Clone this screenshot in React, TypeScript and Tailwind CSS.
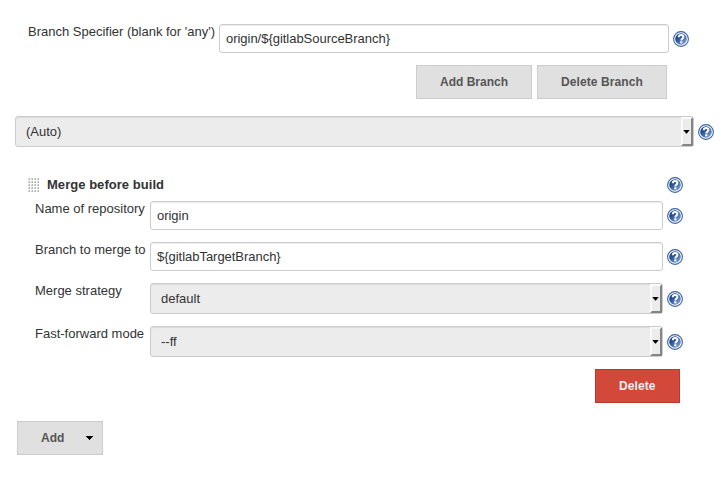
import type { ReactNode } from "react";

function HelpIcon({ className = "" }: { className?: string }) {
  return (
    <svg className={`h-4 w-4 shrink-0 ${className}`} viewBox="0 0 16 16" aria-label="Help">
      <defs>
        <linearGradient id="helpFill" x1="0" y1="0" x2="1" y2="1">
          <stop offset="0.3" stopColor="#1f4a90" />
          <stop offset="1" stopColor="#8fb0dc" />
        </linearGradient>
      </defs>
      <circle cx="8" cy="8" r="7.4" fill="#fff" stroke="#3b62a0" strokeWidth="1.1" />
      <circle cx="8" cy="8" r="5.8" fill="url(#helpFill)" />
      <path d="M5.700 6.300C5.800 4.700 6.700 4 8.100 4c1.400 0 2.300.7 2.300 1.900 0 1.500-2.100 1.600-2.100 3.500" fill="none" stroke="#fff" strokeWidth="1.900" />
      <rect x="7.200" y="10.300" width="2.200" height="2" fill="#fff" />
    </svg>
  );
}

function Caret() {
  return (
    <svg className="h-1 w-[7px] shrink-0" viewBox="0 0 7 4" shapeRendering="crispEdges">
      <path d="M0 0h7v1H6v1H5v1H4v1H3V3H2V2H1V1H0z" fill="#000" />
    </svg>
  );
}

function SelectCaret() {
  return (
    <svg className="-ml-px h-1 w-[7px] shrink-0" viewBox="0 0 7 4">
      <path d="M.3 0h6.400L3.900 3.600h-.8z" fill="#000" />
    </svg>
  );
}

function TextBox({ value, className }: { value: string; className: string }) {
  return (
    <div className={`flex h-[29px] items-center rounded-[3px] border border-[#ccc] bg-white px-1.5 tracking-[-0.03px] shadow-[inset_0_1px_1px_rgba(0,0,0,0.075)] ${className}`}>
      {value}
    </div>
  );
}

function SelectBox({ value, className }: { value: string; className: string }) {
  return (
    <div className={`flex h-[31px] items-center justify-between rounded-[3px] border border-[#ccc] bg-[#ececec] pl-2.5 shadow-[inset_0_1px_1px_rgba(0,0,0,0.075)] ${className}`}>
      <span>{value}</span>
      <span className="flex h-[29px] w-3 items-center justify-center border-2 border-t-[#fafafa] border-r-[#858585] border-b-[#858585] border-l-[#fafafa] bg-[#ececec]">
        <SelectCaret />
      </span>
    </div>
  );
}

function Button({ children, className = "" }: { children: ReactNode; className?: string }) {
  return (
    <button className={`flex h-[34px] items-center border border-[#ccc] bg-[#e0e0e0] pl-[23px] text-[12px] leading-[14px] font-bold whitespace-nowrap text-[#555] ${className}`}>
      {children}
    </button>
  );
}

function Field({ label, className, children }: { label: string; className: string; children: ReactNode }) {
  return (
    <div className={`flex pl-[35px] ${className}`}>
      <div className="w-[115px] shrink-0 whitespace-nowrap">{label}</div>
      {children}
    </div>
  );
}

function DragHandle() {
  return (
    <svg className="mt-px mr-2 h-[14px] w-[11px]" viewBox="0 0 11 14" shapeRendering="crispEdges">
      <defs>
        <pattern id="grip" width="3" height="3" patternUnits="userSpaceOnUse">
          <rect width="2" height="2" fill="#e2e2e2" />
          <rect width="1" height="1" x="1" fill="#bbb" />
          <rect width="1" height="1" x="1" y="1" fill="#b4b4b4" />
          <rect width="1" height="1" y="1" fill="#c8c8c8" />
        </pattern>
      </defs>
      <rect width="11" height="14" fill="url(#grip)" />
    </svg>
  );
}

export default function App() {
  return (
    <main className="h-[487px] w-[725px] overflow-hidden bg-white pt-6 font-['Liberation_Sans',Arial,sans-serif] text-[13px] leading-[15px] text-[#333]">
      <div className="flex pl-7">
        <div className="w-[191px] shrink-0 whitespace-nowrap">Branch Specifier (blank for 'any')</div>
        <TextBox value="origin/${gitlabSourceBranch}" className="w-[450px]" />
        <HelpIcon className="mt-[7px] ml-1" />
      </div>
      <div className="mt-3 flex gap-[5px] pl-[416px]">
        <Button className="w-[116px]">Add Branch</Button>
        <Button className="w-[130px] tracking-[0.1px]">Delete Branch</Button>
      </div>
      <div className="mt-[17px] flex pl-[15px]">
        <SelectBox value="(Auto)" className="w-[679px]" />
        <HelpIcon className="mt-2 ml-1" />
      </div>

      <section className="mt-[30px]">
        <div className="flex h-6 items-start pl-7">
          <DragHandle />
          <h2 className="w-[620px] font-bold tracking-[0.04px]">Merge before build</h2>
          <HelpIcon />
        </div>
        <Field label="Name of repository" className="">
          <TextBox value="origin" className="w-[513px]" />
          <HelpIcon className="mt-[7px] ml-1" />
        </Field>
        <Field label="Branch to merge to" className="mt-3">
          <TextBox value="${gitlabTargetBranch}" className="w-[513px]" />
          <HelpIcon className="mt-[7px] ml-1" />
        </Field>
        <Field label="Merge strategy" className="mt-3">
          <SelectBox value="default" className="w-[513px]" />
          <HelpIcon className="mt-2 ml-1" />
        </Field>
        <Field label="Fast-forward mode" className="mt-3">
          <SelectBox value="--ff" className="w-[513px]" />
          <HelpIcon className="mt-2 ml-1" />
        </Field>
        <div className="mt-3 pl-[595px]">
          <button className="flex h-[34px] w-[85px] items-center border border-[#b93a2c] bg-[#d24939] pl-[23px] text-[12px] leading-[14px] font-bold tracking-[0.1px] text-[#eee]">
            Delete
          </button>
        </div>
      </section>

      <div className="mt-[18px] pl-[17px]">
        <Button className="w-[86px] justify-between pr-[9px]">
          Add
          <Caret />
        </Button>
      </div>
    </main>
  );
}
